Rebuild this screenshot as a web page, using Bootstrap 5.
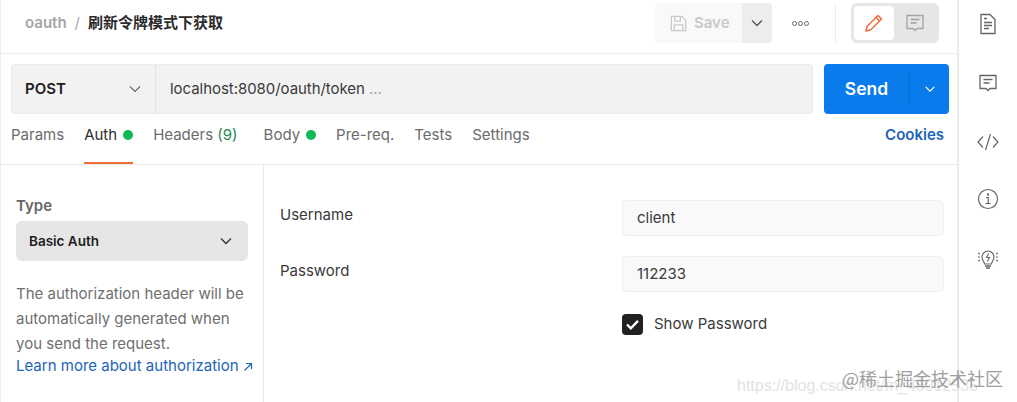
<!DOCTYPE html>
<html lang="zh">
<head>
<meta charset="utf-8">
<title>oauth</title>
<link href="https://cdn.jsdelivr.net/npm/bootstrap@5.3.0/dist/css/bootstrap.min.css" rel="stylesheet">
<script src="https://cdn.jsdelivr.net/npm/bootstrap@5.3.0/dist/js/bootstrap.bundle.min.js"></script>
<style>
html,body{height:402px;overflow:hidden;background:#fff}
body{font-family:Inter,"Noto Sans CJK SC",sans-serif;font-size:15px;color:#3a3a3a;position:relative}
.shell{height:402px;border-left:1px solid #ededed}
.main-pane{width:956px;flex:none;height:402px}
.rail{width:60px;flex:none;border-left:2px solid #ececec;padding-top:9px}
.rail-slot{height:59.500px;width:58px}
.head-row{height:54px;border-bottom:1px solid #ededed;padding:0 18px 7px 24px}
.crumb-a{font-weight:600;color:#a6a6a6}
.crumb-s{color:#a6a6a6;margin:0 8px}
.crumb-b{font-weight:600;color:#2b2b2b}
.save-grp{height:40px;width:117px;border-radius:4px;overflow:hidden;margin-right:20px}
.save-l{width:87px;background:#f9f9f9;color:#c9c9c9;font-weight:600;font-size:15px;gap:6px;padding-left:14px}
.save-r{width:30px;background:#ededed}
.more-dots{margin-right:26px;gap:1px}
.more-dots i{display:block;width:5px;height:5px;border:1px solid #666;border-radius:50%}
.vsep{width:1px;height:40px;background:#ededed;margin-right:15px}
.mode-grp{width:88px;height:40px;background:#e6e6e6;border-radius:6px;padding:3px}
.mode-on{width:40px;height:34px;background:#fff;border-radius:4px}
.mode-off{width:42px;height:34px}
.url-row{padding:10px 8px 0 10px;height:60px;gap:11px}
.url-box{height:50px;flex:1;background:#f2f2f2;border:1px solid #ebebeb;border-radius:4px}
.method{width:144px;border-right:1px solid #e3e3e3;padding:0 13px;font-weight:600;color:#212121}
.url-text{padding-left:14px;color:#3a3a3a;letter-spacing:-.05px}
.url-text span{color:#a0a0a0}
.send-btn{width:125px;height:50px;background:#097bed;border-radius:4px;color:#fff;font-weight:600;font-size:17.500px}
.send-l{width:85px}
.send-r{width:40px;height:34px;border-left:1px solid #0a6fd3}
.tabs-row{height:51px;border-bottom:1px solid #e8e8e8;padding:0 13px 0 10px;color:#6b6b6b}
.tab-i{height:50px;padding-bottom:8px;margin-right:20px;white-space:nowrap;position:relative;gap:6px}
.tab-hd{margin-right:26px}
.tab-act{color:#2f2f2f}
.tab-act::after{content:"";position:absolute;left:0;right:0;bottom:0;height:2px;background:#f26b3a}
.dot-g{width:10px;height:10px;border-radius:50%;background:#0cbb52;display:inline-block}
.cnt{color:#1f8a54}
.cookie{color:#1d63b8;font-weight:600;height:50px;padding-bottom:8px}
.body-row{flex:1;min-height:0}
.side{width:263px;flex:none;border-right:1px solid #e8e8e8;padding:32px 15px 0 15px}
.type-lbl{font-weight:600;color:#666;line-height:17px;margin-bottom:7px}
.type-sel{height:40px;width:232px;background:#e6e6e6;border-radius:6px;padding:0 15px 0 13px;color:#212121;font-weight:600;font-size:13.500px}
.side-desc{color:#6f6f6f;line-height:25px;margin:20px 0 0;width:232px}
.side-link{color:#1d63b8;line-height:19px;white-space:nowrap;display:block;text-decoration:none}
.form-pane{padding:35px 13px 0 16px}
.form-line{height:56px}
.form-lbl{width:342px;flex:none;color:#3a3a3a;line-height:30px}
.form-val{flex:1;height:36px;background:#f9f9f9;border:1px solid #f0f0f0;border-radius:4px;padding-left:14px;color:#3a3a3a;display:flex;align-items:center}
.check-line{padding-left:342px;margin-top:1px;gap:11px;color:#3a3a3a}
.check-b{width:21px;height:21px;background:#212121;border-radius:4px}
.wm-1{position:absolute;left:737px;top:374px;color:#e2e2e2;font-size:16px;white-space:nowrap;font-family:"Liberation Sans",sans-serif}
.wm-2{position:absolute;left:842px;top:366px;color:#8f8f8f;font-size:18px;white-space:nowrap;font-family:"Noto Sans CJK SC",sans-serif;opacity:.85;line-height:24px}
</style>
</head>
<body>
<div class="shell d-flex">
  <div class="main-pane d-flex flex-column">
    <div class="head-row d-flex align-items-center">
      <span class="crumb-a">oauth</span><span class="crumb-s">/</span><span class="crumb-b">刷新令牌模式下获取</span>
      <div class="ms-auto d-flex align-items-center">
        <div class="save-grp d-flex">
          <div class="save-l d-flex align-items-center">
            <svg width="19" height="19" viewBox="0 0 20 20" fill="none" stroke="#c9c9c9" stroke-width="1.300"><path d="M2.500 2.500h11l4 4v11h-15z"/><path d="M6 2.500v5h6v-5"/><path d="M5.500 17.500v-6h9v6"/></svg>
            <span>Save</span>
          </div>
          <div class="save-r d-flex align-items-center justify-content-center">
            <svg width="14" height="14" viewBox="0 0 14 14" fill="none" stroke="#555" stroke-width="1.300"><path d="M2 4.500l5 5 5-5"/></svg>
          </div>
        </div>
        <div class="more-dots d-flex"><i></i><i></i><i></i></div>
        <div class="vsep"></div>
        <div class="mode-grp d-flex">
          <div class="mode-on d-flex align-items-center justify-content-center">
            <svg width="20" height="20" viewBox="0 0 20 20" fill="none" stroke="#f26b3a" stroke-width="1.500" stroke-linejoin="round"><path d="M2 18l1.200-4.800L14 2.500l3.500 3.500L6.800 16.800z"/><path d="M12 4.500l3.500 3.500"/></svg>
          </div>
          <div class="mode-off d-flex align-items-center justify-content-center">
            <svg width="20" height="20" viewBox="0 0 20 20" fill="none" stroke="#a3a3a3" stroke-width="1.300"><path d="M2 2.500h16v13h-6l-2 2-2-2h-6z"/><path d="M5.500 6.500h9M5.500 10h6"/></svg>
          </div>
        </div>
      </div>
    </div>
    <div class="url-row d-flex">
      <div class="url-box d-flex">
        <div class="method d-flex align-items-center justify-content-between">
          <span>POST</span>
          <svg width="14" height="14" viewBox="0 0 14 14" fill="none" stroke="#6b6b6b" stroke-width="1.200"><path d="M2 4.500l5 5 5-5"/></svg>
        </div>
        <div class="url-text d-flex align-items-center">localhost:8080/oauth/token<span>&nbsp;...</span></div>
      </div>
      <div class="send-btn d-flex align-items-center">
        <div class="send-l text-center">Send</div>
        <div class="send-r d-flex align-items-center justify-content-center">
          <svg width="12" height="12" viewBox="0 0 14 14" fill="none" stroke="#fff" stroke-width="1.500"><path d="M2 4.500l5 5 5-5"/></svg>
        </div>
      </div>
    </div>
    <div class="tabs-row d-flex align-items-start">
      <div class="tab-i d-flex align-items-center">Params</div>
      <div class="tab-i tab-act d-flex align-items-center">Auth<span class="dot-g"></span></div>
      <div class="tab-i tab-hd d-flex align-items-center"><span>Headers <span class="cnt">(9)</span></span></div>
      <div class="tab-i d-flex align-items-center">Body<span class="dot-g"></span></div>
      <div class="tab-i d-flex align-items-center">Pre-req.</div>
      <div class="tab-i d-flex align-items-center">Tests</div>
      <div class="tab-i d-flex align-items-center">Settings</div>
      <div class="cookie ms-auto d-flex align-items-center">Cookies</div>
    </div>
    <div class="body-row d-flex">
      <div class="side">
        <div class="type-lbl">Type</div>
        <div class="type-sel d-flex align-items-center justify-content-between">
          <span>Basic Auth</span>
          <svg width="14" height="14" viewBox="0 0 14 14" fill="none" stroke="#333" stroke-width="1.300"><path d="M2 4.500l5 5 5-5"/></svg>
        </div>
        <p class="side-desc">The authorization header will be automatically generated when you send the request.</p>
        <a class="side-link" href="#">Learn more about authorization <svg width="10" height="10" viewBox="0 0 10 10" fill="none" stroke="#1d63b8" stroke-width="1.200"><path d="M1.500 8.500l7-7M3 1.500h5.500V7"/></svg></a>
      </div>
      <div class="form-pane flex-grow-1">
        <div class="form-line d-flex"><div class="form-lbl">Username</div><div class="form-val">client</div></div>
        <div class="form-line d-flex"><div class="form-lbl">Password</div><div class="form-val">112233</div></div>
        <div class="check-line d-flex align-items-center">
          <div class="check-b d-flex align-items-center justify-content-center">
            <svg width="15" height="15" viewBox="0 0 15 15" fill="none" stroke="#fff" stroke-width="2.400"><path d="M2 7.500l3.800 3.800L13 3.800"/></svg>
          </div>
          <span>Show Password</span>
        </div>
      </div>
    </div>
  </div>
  <div class="rail">
    <div class="rail-slot d-flex justify-content-center pt-1">
      <svg width="18" height="22" viewBox="0 0 18 22" fill="none" stroke="#666" stroke-width="1.300"><path d="M2 1.500h9l5 5v14H2z"/><path d="M5 5.500h3M5 9.500h8M5 12.500h8M5 15.500h5"/></svg>
    </div>
    <div class="rail-slot d-flex justify-content-center pt-1">
      <svg width="20" height="20" viewBox="0 0 20 20" fill="none" stroke="#666" stroke-width="1.300"><path d="M2 2.500h16v13h-6l-2 2-2-2H2z"/><path d="M5.500 6.500h9M5.500 10h6"/></svg>
    </div>
    <div class="rail-slot d-flex justify-content-center pt-1">
      <svg width="22" height="20" viewBox="0 0 22 20" fill="none" stroke="#666" stroke-width="1.200"><path d="M6 4.500L1 10l5 5.500M16 4.500l5 5.500-5 5.500M13.500 2l-5 16"/></svg>
    </div>
    <div class="rail-slot d-flex justify-content-center">
      <svg width="22" height="22" viewBox="0 0 22 22" fill="none" stroke="#666" stroke-width="1.200"><circle cx="11" cy="11" r="9.500"/><circle cx="11" cy="6.500" r=".6" fill="#666"/><path d="M9 9.500h2.200v6M8.500 15.500h5.200"/></svg>
    </div>
    <div class="rail-slot d-flex justify-content-center">
      <svg width="22" height="24" viewBox="0 0 22 24" fill="none" stroke="#666" stroke-width="1.100"><path d="M7.500 17c0-2.500-2.500-3.500-2.500-7a6 6 0 0 1 12 0c0 3.500-2.500 4.500-2.500 7z"/><path d="M8 19h6M9 21h4" stroke-width="1.500"/><path d="M11.800 6.500L9.500 10.500h3L10.200 14.500"/><path d="M1 6l2 1M1 10h2M1 14l2-1M21 6l-2 1M21 10h-2M21 14l-2-1"/></svg>
    </div>
  </div>
</div>
<div class="wm-1">https://blog.csdn.net/m_45912535</div>
<div class="wm-2">@稀土掘金技术社区</div>
</body>
</html>
